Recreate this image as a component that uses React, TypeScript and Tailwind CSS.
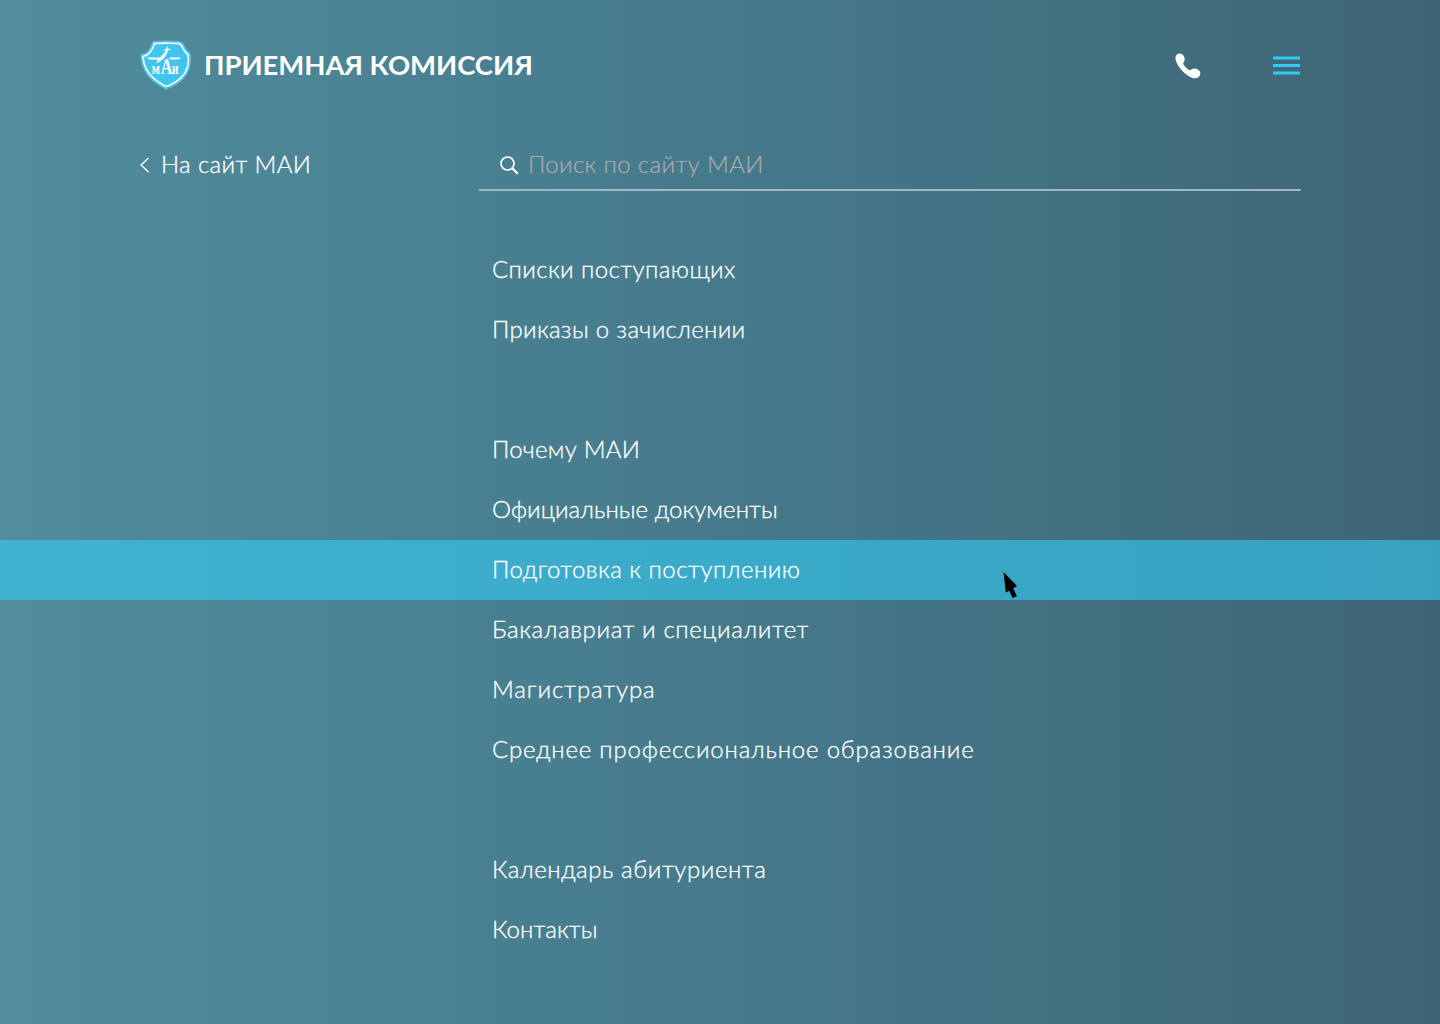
type MenuItem = { label: string; tracking: string; active?: boolean };

const groups: MenuItem[][] = [
  [
    { label: 'Списки поступающих', tracking: 'tracking-[0.41px]' },
    { label: 'Приказы о зачислении', tracking: 'tracking-[0.32px]' },
  ],
  [
    { label: 'Почему МАИ', tracking: 'tracking-[0.24px]' },
    { label: 'Официальные документы', tracking: 'tracking-[0.07px]' },
    { label: 'Подготовка к поступлению', tracking: 'tracking-[0.49px]', active: true },
    { label: 'Бакалавриат и специалитет', tracking: 'tracking-[0.6px]' },
    { label: 'Магистратура', tracking: 'tracking-[0.9px]' },
    { label: 'Среднее профессиональное образование', tracking: 'tracking-[0.8px]' },
  ],
  [
    { label: 'Календарь абитуриента', tracking: 'tracking-[0.57px]' },
    { label: 'Контакты', tracking: 'tracking-[0.1px]' },
  ],
];

function Logo() {
  return (
    <svg width="52" height="50" viewBox="0 0 52 50" className="shrink-0">
      <path
        d="M13 1.5Q26 .5 39 1.5Q43 2 44.500 6.500Q46 10 50 13.500C52.500 29 46 42 26 49C11 42 1.500 32 1 14.500Q9 14.500 13 1.500Z"
        fill="#41c5ee"
        stroke="#62c5e0"
        strokeWidth="1"
      />
      <path
        d="M14.500 3.500Q26 2.800 38 3.500Q41.500 4 42.800 8Q44.500 12 48 14.500C50 28 44 40 26 46.500C12.500 39.500 4 31 3 16.500Q11 15 14.500 3.500Z"
        fill="none"
        stroke="#fff"
        strokeWidth="1.600"
      />
      <path
        d="M6.500 17.600L20 17.600L24.500 12.500L26 10.200L22.500 10.600L26.500 8.500L27.700 5.800L28.200 8.600L31.500 9.700L28 10.300L27.300 13L24 18.200L19.500 21.800L15.500 23.200L18.500 19.800L10 19.400ZM29.500 17.600L40.500 17.600L39.500 19.200L30 19.400Z"
        fill="#fff"
      />
      <text
        transform="scale(.7 1)"
        y="34.500"
        fill="#fff"
        fontFamily='"Liberation Serif", serif'
        fontWeight="700"
        fontSize="17"
      >
        <tspan x="16.800">м</tspan>
        <tspan x="29.800" fontSize="23">А</tspan>
        <tspan x="45.500">и</tspan>
      </text>
    </svg>
  );
}

function Cursor() {
  return (
    <svg width="16" height="28" viewBox="0 0 16 28" className="pointer-events-none absolute left-[1002px] top-[31px]">
      <path d="M1.500 1L15 15L11.200 17.500L15 25.200L10.500 27L7.200 19.800L3.800 21.500Z" fill="#000" />
    </svg>
  );
}

export default function App() {
  return (
    <div
      className={
        'h-[1024px] w-[1440px] overflow-hidden bg-[linear-gradient(90deg,#518d9c_0%,#457a8b_50%,#3e6576_100%)] ' +
        'font-["Lato","Noto_Sans",sans-serif] text-white'
      }
    >
      <header className="flex h-[130px] items-center px-[140px]">
        <Logo />
        <h1 className="ml-[12px] whitespace-nowrap text-[27.5px] font-bold leading-[34px] tracking-[-0.05px]">
          ПРИЕМНАЯ КОМИССИЯ
        </h1>
        <div className="ml-auto flex items-center pt-px">
          <svg width="26" height="26" viewBox="0 0 26 26" fill="#fff">
            <path d="M1.200 2.300C3 .2 5.600-.2 7.400 1.400C9.600 3.500 10.500 6.800 8.900 9C8 10.400 7.900 10.700 8.800 11.900C10.200 13.900 12 15.700 14.100 17C15.100 17.600 15.400 17.300 16.300 16.600C18.700 14.700 22.500 15.300 24.500 18C25.900 20 25.500 22.600 23.300 24.200C20.600 26 17.200 25.300 13.800 23.200C8.700 20.100 3.800 14.900 1.600 9.600C.4 6.800 0 4.100 1.200 2.300Z" />
          </svg>
          <svg width="27" height="20" viewBox="0 0 27 20" fill="#31caf3" className="ml-[72.500px]">
            <path d="M0 .6h27v3H0zM0 8h27v3H0zM0 15.500h27v3H0z" />
          </svg>
        </div>
      </header>

      <div className="flex h-[61px] items-start pl-[140px] pr-[139.500px] pt-[12px] text-[24px] font-light leading-[44px]">
        <a className="flex w-[339.400px] items-center whitespace-nowrap tracking-[0.35px] [-webkit-text-stroke:0.3px_white]">
          <svg width="10" height="16" viewBox="0 0 10 16" fill="none" stroke="#fff" strokeWidth="1.400" className="mr-[11px] mt-[2px]">
            <path d="M8.500 1L1 8L8.500 15" />
          </svg>
          На сайт МАИ
        </a>
        <div className="flex h-[49px] flex-1 items-start border-b-2 border-[#9db8c2] pl-[20.500px]">
          <svg width="19" height="19" viewBox="0 0 19 19" fill="none" stroke="#fff" strokeWidth="1.700" className="mr-[9px] mt-[14px]">
            <circle cx="7.500" cy="7.500" r="6.500" />
            <path d="M12 12L17.700 17.700" strokeWidth="2.200" />
          </svg>
          <span className="whitespace-nowrap tracking-[0.36px] text-[#b0adad] [-webkit-text-stroke:0.15px_#b0adad]">
            Поиск по сайту МАИ
          </span>
        </div>
      </div>

      <nav className="mt-[49px] flex flex-col gap-[60px]">
        {groups.map((items, i) => (
          <ul key={i}>
            {items.map((item) => (
              <li
                key={item.label}
                className={
                  'relative h-[60px] pl-[492px] text-[24px] font-light leading-[58px] [-webkit-text-stroke:0.3px_white] ' +
                  (item.active ? 'bg-[linear-gradient(90deg,#40b3d1,#3aaac9_50%,#36a2c0)]' : '')
                }
              >
                <span className={'whitespace-nowrap ' + item.tracking}>{item.label}</span>
                {item.active && <Cursor />}
              </li>
            ))}
          </ul>
        ))}
      </nav>
    </div>
  );
}
